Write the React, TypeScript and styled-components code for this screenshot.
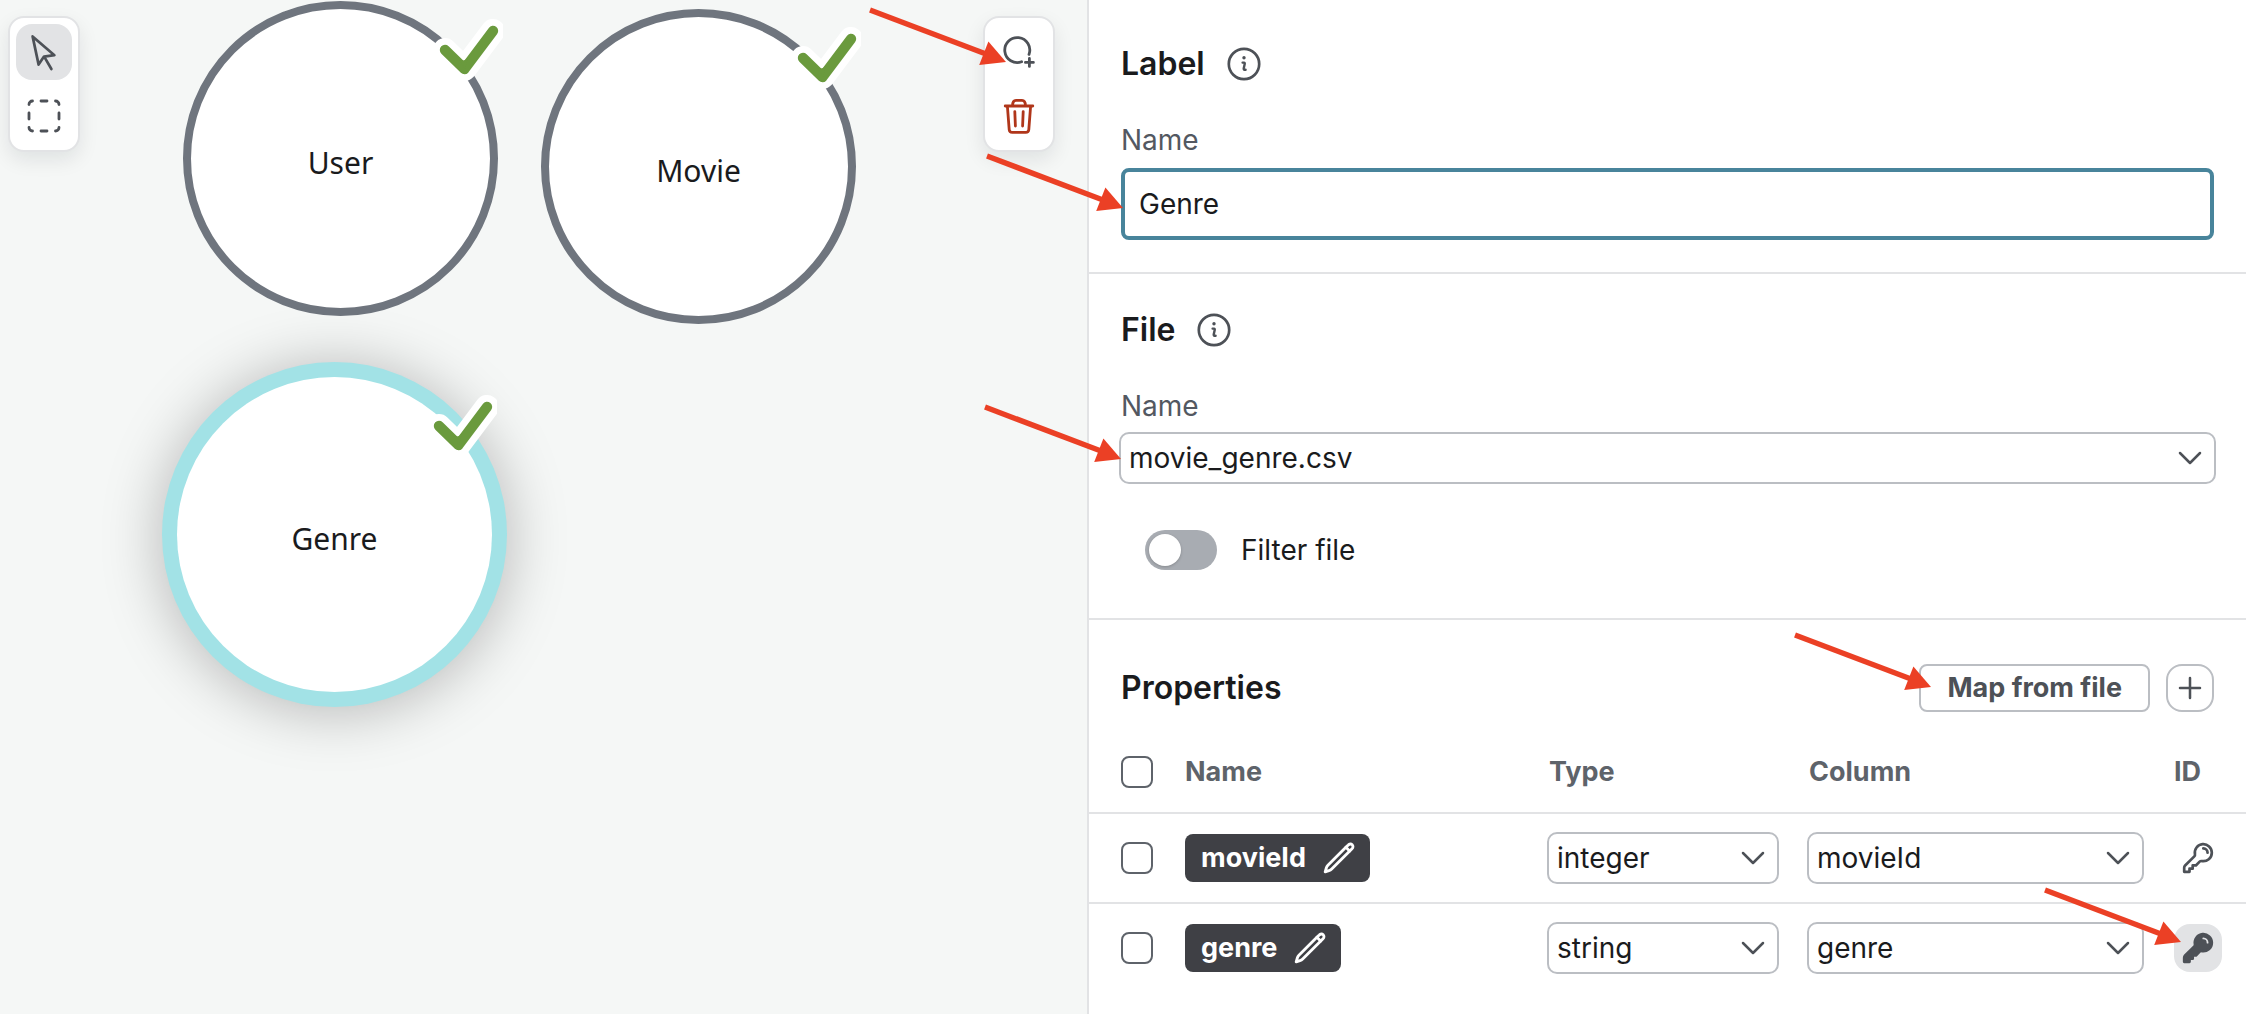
import React, { useState } from "react";
import styled, { createGlobalStyle, css } from "styled-components";

const color = {
  canvas: "#f5f7f6",
  panel: "#ffffff",
  line: "#e2e3e5",
  controlLine: "#bbbec3",
  text: "#1a1b1d",
  icon: "#4d5157",
  label: "#535861",
  muted: "#5e636a",
  chip: "#3f4045",
  focus: "#48849b",
  danger: "#b0361a",
  node: "#6f757e",
  selected: "#a2e2e6",
  success: "#6a9a3d",
  pointer: "#eb4025",
};

const GlobalStyle = createGlobalStyle`
  *, *::before, *::after { box-sizing: border-box; }
  body {
    margin: 0;
    background: ${color.panel};
    color: ${color.text};
    font-family: Inter, "Liberation Sans", sans-serif;
    font-size: 28px;
    line-height: 32px;
  }
  button, input, select { font: inherit; color: inherit; margin: 0; }
  button { cursor: pointer; }
`;

const Page = styled.div`
  display: grid;
  grid-template-columns: minmax(0, 1087fr) minmax(0, 1159fr);
  min-height: 100vh;
`;

/* ---------- Canvas ---------- */

const Canvas = styled.main`
  position: relative;
  background: ${color.canvas};
`;

const Toolbar = styled.div<{ $side: "left" | "right" }>`
  position: absolute;
  top: 16px;
  ${(p) => (p.$side === "left" ? "left: 8px;" : "right: 32px;")}
  display: flex;
  flex-direction: column;
  gap: 8px;
  padding: 6px;
  border: 2px solid ${color.line};
  border-radius: 16px;
  background: ${color.panel};
  box-shadow: 0 8px 20px rgba(12, 26, 37, 0.09);
`;

const ToolButton = styled.button<{ $active?: boolean; $danger?: boolean }>`
  display: grid;
  place-items: center;
  width: 56px;
  height: 56px;
  padding: 0;
  border: 0;
  border-radius: 16px;
  background: ${(p) => (p.$active ? color.line : "transparent")};
  color: ${(p) => (p.$danger ? color.danger : color.icon)};
`;

const GraphNode = styled.div<{ $x: number; $y: number; $selected?: boolean }>`
  position: absolute;
  left: ${(p) => p.$x}px;
  top: ${(p) => p.$y}px;
  display: grid;
  place-items: center;
  width: 315px;
  height: 315px;
  border-radius: 50%;
  background: ${color.panel};
  ${(p) =>
    p.$selected
      ? css`
          box-shadow: 0 0 0 15px ${color.selected}, 0 4px 60px 15px rgba(0, 0, 0, 0.27);
        `
      : css`
          border: 8px solid ${color.node};
        `}
`;

const NodeLabel = styled.span`
  padding-top: 8px;
  font-family: "Noto Sans", "Open Sans", sans-serif;
  font-size: 30px;
  line-height: 40px;
`;

const CheckBadge = styled.svg<{ $selected?: boolean }>`
  position: absolute;
  top: ${(p) => (p.$selected ? 8 : 0)}px;
  right: ${(p) => (p.$selected ? -5 : -13)}px;
  width: 80px;
  height: 80px;
`;

/* ---------- Pointer arrows ---------- */

const ArrowSvg = styled.svg<{ $left: number; $top: number }>`
  position: absolute;
  left: ${(p) => p.$left}px;
  top: ${(p) => p.$top}px;
  z-index: 2;
  width: 142px;
  height: 62px;
  pointer-events: none;
`;

const Arrow = ({ left, top }: { left: number; top: number }) => (
  <ArrowSvg $left={left} $top={top} viewBox="0 0 142 62" aria-hidden="true">
    <path d="M4 6 L120 50" stroke={color.pointer} strokeWidth="5.4" />
    <path d="M140 58 L122.4 37.6 L113.2 61 Z" fill={color.pointer} />
  </ArrowSvg>
);

/* ---------- Side panel ---------- */

const Panel = styled.aside`
  padding-top: 8px;
  border-left: 2px solid ${color.line};
  background: ${color.panel};
`;

const Section = styled.section<{ $bottom: number }>`
  padding: 36px 32px ${(p) => p.$bottom}px;
  border-bottom: 2px solid ${color.line};
`;

const HeadingRow = styled.div`
  display: flex;
  align-items: center;
  gap: 22px;
  margin-bottom: 40px;
`;

const Heading = styled.h2`
  margin: 0;
  font-size: 32px;
  font-weight: 600;
  line-height: 40px;
`;

const InfoButton = styled.button`
  display: grid;
  padding: 0;
  border: 0;
  background: none;
  color: ${color.icon};
`;

const FieldLabel = styled.label`
  display: block;
  margin-bottom: 12px;
  color: ${color.label};
`;

const Anchor = styled.div`
  position: relative;
`;

const TextInput = styled.input`
  display: block;
  width: 100%;
  height: 72px;
  padding: 0 14px;
  border: 4px solid ${color.focus};
  border-radius: 8px;
  outline: 0;
  background: ${color.panel};
`;

const SelectBox = styled.div`
  position: relative;
  display: grid;
  align-items: center;
  margin: -2px;
  color: ${color.icon};
  > svg {
    grid-area: 1 / 1;
    justify-self: end;
    margin-right: 10px;
    pointer-events: none;
  }
`;

const NativeSelect = styled.select`
  grid-area: 1 / 1;
  appearance: none;
  width: 100%;
  height: 52px;
  padding: 0 48px 0 8px;
  border: 2px solid ${color.controlLine};
  border-radius: 10px;
  background: ${color.panel};
  color: ${color.text};
`;

const SwitchLabel = styled.label`
  display: flex;
  align-items: center;
  gap: 24px;
  margin: 48px 0 0 24px;
`;

const SwitchInput = styled.input`
  appearance: none;
  display: flex;
  width: 72px;
  height: 40px;
  padding: 4px;
  border-radius: 20px;
  background: #a8acb2;
  &::before {
    content: "";
    width: 32px;
    height: 32px;
    border-radius: 50%;
    background: ${color.panel};
    box-shadow: 0 1px 3px rgba(0, 0, 0, 0.2);
  }
  &:checked {
    justify-content: flex-end;
    background: ${color.focus};
  }
`;

const PropertiesBar = styled.div`
  display: flex;
  align-items: center;
  gap: 16px;
  padding: 44px 32px 20px;
  > h2 {
    flex: 1;
  }
`;

const MapButton = styled.button`
  position: relative;
  height: 48px;
  padding: 0 26px;
  border: 2px solid ${color.controlLine};
  border-radius: 8px;
  background: ${color.panel};
  color: ${color.icon};
  font-size: 27px;
  font-weight: 700;
`;

const AddButton = styled.button`
  display: grid;
  place-items: center;
  width: 48px;
  height: 48px;
  padding: 0;
  border: 2px solid ${color.controlLine};
  border-radius: 16px;
  background: ${color.panel};
  color: ${color.icon};
`;

const Table = styled.table`
  width: 100%;
  table-layout: fixed;
  border-collapse: separate;
  border-spacing: 0;
`;

const Col = styled.col<{ $width?: number }>`
  ${(p) => p.$width && `width: ${p.$width}px;`}
`;

const HeadCell = styled.th`
  height: 82px;
  padding: 0;
  border-bottom: 2px solid ${color.line};
  color: ${color.muted};
  font-size: 27px;
  font-weight: 700;
  text-align: left;
  &:first-child {
    padding-left: 32px;
  }
`;

const Cell = styled.td`
  height: 90px;
  padding: 0 32px 0 0;
  border-bottom: 2px solid ${color.line};
  &:first-child {
    padding: 0 0 0 32px;
  }
  &:last-child {
    padding: 0;
  }
  tr:last-child > & {
    border-bottom-color: transparent;
  }
`;

const Checkbox = styled.input`
  appearance: none;
  display: block;
  width: 32px;
  height: 32px;
  border: 2px solid ${color.muted};
  border-radius: 8px;
  background: ${color.panel};
  &:checked {
    background: ${color.focus};
  }
`;

const Chip = styled.button`
  display: flex;
  align-items: center;
  gap: 16px;
  height: 48px;
  padding: 0 14px 0 16px;
  border: 0;
  border-radius: 8px;
  background: ${color.chip};
  color: ${color.panel};
  font-size: 27px;
  font-weight: 700;
`;

const KeyButton = styled.button<{ $active: boolean }>`
  position: relative;
  display: grid;
  place-items: center;
  width: 48px;
  height: 48px;
  padding: 0;
  border: 0;
  border-radius: 16px;
  background: ${(p) => (p.$active ? color.line : "transparent")};
  color: ${color.icon};
`;

/* ---------- Icons ---------- */

const stroke = {
  fill: "none",
  stroke: "currentColor",
  strokeLinecap: "round" as const,
  strokeLinejoin: "round" as const,
  "aria-hidden": true,
};

const CursorIcon = () => (
  <svg width="40" height="40" viewBox="0 0 40 40" strokeWidth="2.7" {...stroke}>
    <path d="M8.6 4.4 L30.4 23.2 L20 24.6 L14.6 32.6 Z" />
    <path d="M21.2 26.4 L27.4 37" />
  </svg>
);

const MarqueeIcon = () => (
  <svg width="40" height="40" viewBox="0 0 40 40" strokeWidth="2.8" {...stroke}>
    <path d="M5 8.5 A3.5 3.5 0 0 1 8.5 5 M31.5 5 A3.5 3.5 0 0 1 35 8.5 M35 31.5 A3.5 3.5 0 0 1 31.5 35 M8.5 35 A3.5 3.5 0 0 1 5 31.5" />
    <path d="M17 5 H23 M17 35 H23 M5 17 V23 M35 17 V23" />
  </svg>
);

const AddNodeIcon = () => (
  <svg width="40" height="40" viewBox="0 0 40 40" strokeWidth="2.8" {...stroke}>
    <path d="M30 22.4 A12.5 12.5 0 1 0 22.6 29.8" />
    <path d="M30.4 26.4 V34.4 M26.4 30.4 H34.4" />
  </svg>
);

const TrashIcon = () => (
  <svg width="40" height="40" viewBox="0 0 40 40" strokeWidth="2.8" {...stroke}>
    <path d="M6.2 10 H33.8" />
    <path d="M13.6 9.6 C13.6 6 14.8 4.4 17 4.4 H23 C25.2 4.4 26.4 6 26.4 9.6" />
    <path d="M8.4 10.4 L10.2 33.6 Q10.5 36.4 13.2 36.4 H26.8 Q29.5 36.4 29.8 33.6 L31.6 10.4" />
    <path d="M15.8 15.6 L16.4 30 M24.2 15.6 L23.6 30" />
  </svg>
);

const InfoIcon = () => (
  <svg width="34" height="34" viewBox="0 0 34 34" strokeWidth="2.7" {...stroke}>
    <circle cx="17" cy="17" r="15.2" />
    <circle cx="17" cy="10.8" r="1.7" fill="currentColor" stroke="none" />
    <path d="M15.6 15.6 H17 Q18 15.6 17.7 17 L16.7 21.6 Q16.6 23.2 18.6 22.8" strokeWidth="2.4" />
  </svg>
);

const ChevronIcon = () => (
  <svg width="32" height="32" viewBox="0 0 24 24" strokeWidth="1.9" {...stroke}>
    <path d="M19.5 8.25l-7.5 7.5-7.5-7.5" />
  </svg>
);

const PlusIcon = () => (
  <svg width="32" height="32" viewBox="0 0 24 24" strokeWidth="1.9" {...stroke}>
    <path d="M12 4.5v15m7.5-7.5h-15" />
  </svg>
);

const PencilIcon = () => (
  <svg width="34" height="34" viewBox="0 0 24 24" strokeWidth="2" {...stroke}>
    <path d="M16.86 4.49l1.69-1.69a1.88 1.88 0 1 1 2.65 2.65L6.83 19.82a4.5 4.5 0 0 1-1.9 1.13l-2.68.8.8-2.69a4.5 4.5 0 0 1 1.13-1.89L16.86 4.49z" />
    <path d="M16.86 4.49L19.5 7.13" />
  </svg>
);

const keyOutline =
  "M21.75 8.25a6 6 0 0 1-7.03 5.91c-.56-.1-1.16.03-1.56.43L10.5 17.25H8.25v2.25H6v2.25H2.25v-2.82c0-.6.24-1.17.66-1.59l6.5-6.5c.4-.4.53-1 .43-1.56A6 6 0 1 1 21.75 8.25z";

const KeyIcon = ({ solid }: { solid: boolean }) => (
  <svg width="34" height="34" viewBox="0 0 24 24" strokeWidth="1.9" {...stroke}>
    <path d={keyOutline} fill={solid ? "currentColor" : "none"} />
    <path d="M15.75 5.25a3 3 0 0 1 3 3" stroke={solid ? color.line : "currentColor"} strokeWidth={solid ? 1.3 : 1.9} />
  </svg>
);

/* ---------- Composite parts ---------- */

const nodes = [
  { name: "User", x: 183, y: 1, selected: false },
  { name: "Movie", x: 541, y: 9, selected: false },
  { name: "Genre", x: 177, y: 377, selected: true },
];

const Node = ({ name, x, y, selected }: (typeof nodes)[number]) => (
  <GraphNode $x={x} $y={y} $selected={selected}>
    <NodeLabel>{name}</NodeLabel>
    <CheckBadge $selected={selected} viewBox="0 0 80 80" fill="none" strokeLinecap="round" strokeLinejoin="round" aria-label="Mapped">
      <path d="M22 41 L41.5 60 L70 22" stroke="#ffffff" strokeWidth="24" />
      <path d="M22 41 L41.5 60 L70 22" stroke={color.success} strokeWidth="10.4" />
      <path d="M36 50 Q41 54 45 48 L42 60 Z" fill={color.success} />
    </CheckBadge>
  </GraphNode>
);

type SelectProps = { id?: string; label?: string; options: string[]; initial: string };

const Select = ({ id, label, options, initial }: SelectProps) => {
  const [value, setValue] = useState(initial);
  return (
    <SelectBox>
      <NativeSelect id={id} aria-label={label} value={value} onChange={(e) => setValue(e.target.value)}>
        {options.map((option) => (
          <option key={option}>{option}</option>
        ))}
      </NativeSelect>
      <ChevronIcon />
    </SelectBox>
  );
};

const properties = [
  { name: "movieId", type: "integer", isKey: false },
  { name: "genre", type: "string", isKey: true },
];

export default function App() {
  const [label, setLabel] = useState("Genre");

  return (
    <>
      <GlobalStyle />
      <Page>
        <Canvas>
          {nodes.map((node) => (
            <Node key={node.name} {...node} />
          ))}
          <Toolbar $side="left" role="toolbar" aria-label="Selection tools">
            <ToolButton $active aria-label="Select">
              <CursorIcon />
            </ToolButton>
            <ToolButton aria-label="Select area">
              <MarqueeIcon />
            </ToolButton>
          </Toolbar>
          <Toolbar $side="right" role="toolbar" aria-label="Node tools">
            <ToolButton aria-label="Add node">
              <AddNodeIcon />
            </ToolButton>
            <ToolButton $danger aria-label="Delete">
              <TrashIcon />
            </ToolButton>
            <Arrow left={-119} top={-14} />
          </Toolbar>
        </Canvas>

        <Panel>
          <Section $bottom={32}>
            <HeadingRow>
              <Heading>Label</Heading>
              <InfoButton aria-label="About labels">
                <InfoIcon />
              </InfoButton>
            </HeadingRow>
            <FieldLabel htmlFor="label-name">Name</FieldLabel>
            <Anchor>
              <TextInput id="label-name" type="text" value={label} onChange={(e) => setLabel(e.target.value)} />
              <Arrow left={-138} top={-18} />
            </Anchor>
          </Section>

          <Section $bottom={48}>
            <HeadingRow>
              <Heading>File</Heading>
              <InfoButton aria-label="About files">
                <InfoIcon />
              </InfoButton>
            </HeadingRow>
            <FieldLabel htmlFor="file-name">Name</FieldLabel>
            <Anchor>
              <Select id="file-name" options={["movie_genre.csv"]} initial="movie_genre.csv" />
              <Arrow left={-140} top={-31} />
            </Anchor>
            <SwitchLabel>
              <SwitchInput type="checkbox" role="switch" />
              Filter file
            </SwitchLabel>
          </Section>

          <PropertiesBar>
            <Heading>Properties</Heading>
            <MapButton>
              Map from file
              <Arrow left={-130} top={-37} />
            </MapButton>
            <AddButton aria-label="Add property">
              <PlusIcon />
            </AddButton>
          </PropertiesBar>

          <Table>
            <colgroup>
              <Col $width={96} />
              <Col $width={364} />
              <Col $width={260} />
              <Col />
              <Col $width={72} />
            </colgroup>
            <thead>
              <tr>
                <HeadCell>
                  <Checkbox type="checkbox" aria-label="Select all properties" />
                </HeadCell>
                <HeadCell>Name</HeadCell>
                <HeadCell>Type</HeadCell>
                <HeadCell>Column</HeadCell>
                <HeadCell>ID</HeadCell>
              </tr>
            </thead>
            <tbody>
              {properties.map((property) => (
                <tr key={property.name}>
                  <Cell>
                    <Checkbox type="checkbox" aria-label={`Select ${property.name}`} />
                  </Cell>
                  <Cell>
                    <Chip>
                      {property.name}
                      <PencilIcon />
                    </Chip>
                  </Cell>
                  <Cell>
                    <Select label={`Type of ${property.name}`} options={["integer", "string"]} initial={property.type} />
                  </Cell>
                  <Cell>
                    <Select label={`Column of ${property.name}`} options={["movieId", "genre"]} initial={property.name} />
                  </Cell>
                  <Cell>
                    <KeyButton $active={property.isKey} aria-label={`Use ${property.name} as ID`} aria-pressed={property.isKey}>
                      <KeyIcon solid={property.isKey} />
                      {property.isKey && <Arrow left={-133} top={-40} />}
                    </KeyButton>
                  </Cell>
                </tr>
              ))}
            </tbody>
          </Table>
        </Panel>
      </Page>
    </>
  );
}
